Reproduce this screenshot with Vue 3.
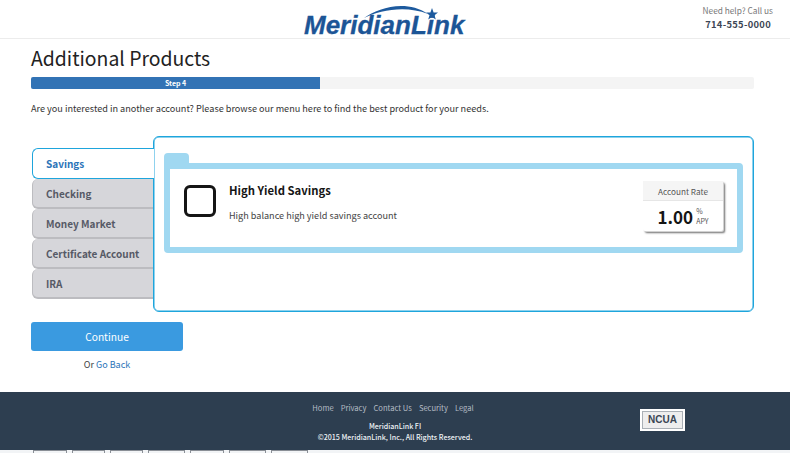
<template>
  <div class="page">
    <header class="top">
      <div class="logo">
        <svg class="swoosh" width="84" height="24" viewBox="0 0 84 24">
          <path d="M4 16 C18 6 46 -3 68 12 C46 3 20 8 4 16 Z" fill="#1d5a9e" />
          <polygon points="72,6 73.6,10.4 78,10.4 74.5,13.2 75.8,17.6 72,15 68.2,17.6 69.5,13.2 66,10.4 70.4,10.4" fill="#1d5a9e" />
        </svg>
        <span>MeridianLink</span>
      </div>
      <div class="help">
        <div class="help-text">Need help? Call us</div>
        <div class="phone">714-555-0000</div>
      </div>
    </header>

    <main class="content">
      <h1>Additional Products</h1>
      <div class="progress">
        <div class="progress-fill" :style="{ width: progress + '%' }">Step 4</div>
      </div>
      <p class="intro">Are you interested in another account? Please browse our menu here to find the best product for your needs.</p>

      <div class="picker">
        <ul class="tabs">
          <li v-for="(tab, i) in tabs" :key="tab" class="tab" :class="{ active: i === 0 }">{{ tab }}</li>
        </ul>
        <div class="panel">
          <div class="folder">
            <div class="folder-tab"></div>
            <div class="product">
              <div class="check"></div>
              <div class="info">
                <div class="name">High Yield Savings</div>
                <div class="desc">High balance high yield savings account</div>
              </div>
              <div class="rate">
                <div class="rate-head">Account Rate</div>
                <div class="rate-body">
                  <span class="rate-num">1.00</span>
                  <span class="rate-unit"><span>%</span><span>APY</span></span>
                </div>
              </div>
            </div>
          </div>
        </div>
      </div>

      <div class="actions">
        <button class="continue">Continue</button>
        <div class="back">Or <a href="#">Go Back</a></div>
      </div>
    </main>

    <footer class="foot">
      <div class="foot-main">
        <nav class="links">
          <a v-for="link in links" :key="link" href="#">{{ link }}</a>
        </nav>
        <div class="fi">MeridianLink FI</div>
        <div class="copy">©2015 MeridianLink, Inc., All Rights Reserved.</div>
      </div>
      <div class="ncua">NCUA</div>
    </footer>

    <!-- tops of the boxes cut off under the footer -->
    <div class="strip">
      <span v-for="(w, i) in stripBoxes" :key="i" class="strip-box" :style="{ width: w + 'px' }"></span>
    </div>
  </div>
</template>

<script setup>
const progress = 40
const tabs = ['Savings', 'Checking', 'Money Market', 'Certificate Account', 'IRA']
const links = ['Home', 'Privacy', 'Contact Us', 'Security', 'Legal']
const stripBoxes = [34, 33, 33, 37, 34, 37, 37]
</script>

<style>
html,
body {
  margin: 0;
  background: #fff;
}
</style>

<style scoped>
.page {
  width: 790px;
  height: 453px;
  overflow: hidden;
  font-family: "Noto Sans CJK SC", "Noto Sans", sans-serif;
  color: #333;
}

.top {
  height: 38px;
  border-bottom: 1px solid #ececec;
  position: relative;
  display: flex;
  justify-content: flex-end;
}

.logo {
  position: absolute;
  left: 304px;
  top: 12px;
  font-family: "Liberation Sans", sans-serif;
  font-weight: bold;
  font-style: italic;
  font-size: 26px;
  line-height: 27px;
  color: #1c5596;
  white-space: nowrap;
  -webkit-text-stroke: 0.3px #1c5596;
}

.swoosh {
  position: absolute;
  left: 56px;
  top: -10px;
}

.help {
  width: 87px;
  padding-top: 3px;
  padding-right: 17px;
  text-align: right;
}

.help-text {
  font-size: 8.3px;
  line-height: 14px;
  color: #777;
}

.phone {
  font-size: 9.4px;
  line-height: 14px;
  padding-right: 2px;
  font-weight: 700;
  color: #3c4654;
  letter-spacing: 0.3px;
}

.content {
  padding: 0 36px 0 31px;
  height: 353px;
}

h1 {
  margin: 0;
  padding-top: 3px;
  font-size: 19.4px;
  line-height: 32px;
  font-weight: 400;
  color: #222;
}

.progress {
  height: 12px;
  margin-top: 3px;
  background: #f4f4f4;
  border-radius: 2px;
  overflow: hidden;
}

.progress-fill {
  height: 12px;
  background: #3273b5;
  color: #fff;
  font-size: 7px;
  font-weight: 700;
  line-height: 12px;
  text-align: center;
}

.intro {
  margin: 12px 0 0;
  font-size: 9.13px;
  line-height: 15px;
  color: #333;
}

.picker {
  display: flex;
  margin-top: 20px;
  align-items: flex-start;
}

.tabs {
  list-style: none;
  margin: 12px -1px 0 1px;
  padding: 0;
  width: 122px;
  position: relative;
  z-index: 1;
}

.tab {
  box-sizing: border-box;
  height: 30px;
  margin-right: 1px;
  padding-left: 13px;
  background: #d6d6da;
  border: 1px solid #bcbcc0;
  border-width: 0 0 2px 1px;
  border-radius: 6px 0 0 6px;
  font-size: 10px;
  line-height: 29px;
  font-weight: 700;
  color: #565a66;
  white-space: nowrap;
}

.tab.active {
  height: 31px;
  margin-right: 0;
  background: #fff;
  border: 1px solid #1ea5dc;
  border-right: 0;
  color: #2b74b8;
  line-height: 29px;
}

.panel {
  box-sizing: border-box;
  flex: 1;
  height: 176px;
  border: 1px solid #1ea5dc;
  box-shadow: inset 0 0 0 0.5px #1ea5dc;
  border-radius: 6px;
  padding: 16px 10px 0;
  background: #fff;
}

.folder-tab {
  width: 25px;
  height: 10px;
  background: #a0d8f1;
  border-radius: 4px 4px 0 0;
}

.product {
  box-sizing: border-box;
  height: 90px;
  display: flex;
  border: 6px solid #a0d8f1;
  border-radius: 0 4px 4px 4px;
  padding: 16px 14px 0 14px;
  background: #fff;
}

.check {
  box-sizing: border-box;
  width: 32px;
  height: 32px;
  border: 3px solid #151515;
  border-radius: 6px;
}

.info {
  flex: 1;
  margin-left: 13px;
}

.name {
  font-size: 11.3px;
  font-weight: 700;
  line-height: 16px;
  color: #151515;
  margin-top: -3px;
}

.desc {
  font-size: 9.1px;
  line-height: 15px;
  margin-top: 10px;
  color: #444;
}

.rate {
  box-sizing: border-box;
  width: 80px;
  height: 50px;
  margin-top: -4px;
  background: #fff;
  border-radius: 2px;
  box-shadow: 1px 1px 1px #ddd, 2px 2px 2px #666;
}

.rate-head {
  height: 19px;
  background: #f5f5f5;
  border-bottom: 1px solid #e6e6e6;
  font-size: 8.2px;
  line-height: 20px;
  text-align: center;
  color: #555;
}

.rate-body {
  display: flex;
  justify-content: center;
  align-items: center;
  height: 30px;
  gap: 3px;
}

.rate-num {
  font-size: 17px;
  font-weight: 700;
  line-height: 29px;
  color: #151515;
}

.rate-unit {
  display: flex;
  flex-direction: column;
  font-size: 7px;
  line-height: 10px;
  color: #555;
}

.actions {
  width: 152px;
  margin-top: 10px;
  text-align: center;
}

.continue {
  display: block;
  width: 152px;
  height: 29px;
  border: 0;
  border-radius: 3px;
  background: #3a9ae0;
  color: #fff;
  font-family: inherit;
  font-size: 10.2px;
}

.back {
  margin-top: 6px;
  font-size: 9px;
  line-height: 16px;
  color: #444;
}

.back a {
  color: #2b74b8;
  text-decoration: none;
}

.foot {
  height: 58px;
  background: #2d3e50;
  position: relative;
  display: flex;
  justify-content: center;
}

.foot-main {
  width: 160px;
  text-align: center;
  padding-top: 9px;
}

.links {
  display: flex;
  justify-content: center;
  gap: 7px;
  padding-right: 4px;
  font-size: 7.6px;
  line-height: 14px;
}

.links a {
  color: #b4bcc4;
  text-decoration: none;
  white-space: nowrap;
}

.fi,
.copy {
  font-size: 7.1px;
  line-height: 11px;
  color: #eef2f5;
  white-space: nowrap;
  font-weight: 500;
}

.fi {
  margin-top: 6px;
}

.ncua {
  position: absolute;
  left: 640px;
  top: 17px;
  box-sizing: border-box;
  width: 45px;
  height: 22px;
  border: 2px solid #fff;
  box-shadow: inset 0 0 0 1px #aab0b6;
  background: #eee;
  font-family: "Liberation Sans", sans-serif;
  font-size: 10px;
  font-weight: 700;
  line-height: 18px;
  text-align: center;
  color: #3a4654;
}

.strip {
  height: 3px;
  display: flex;
  gap: 5px;
  padding-left: 33px;
  background: #f2f4f6;
}

.strip-box {
  box-sizing: border-box;
  height: 3px;
  border: 1px solid #8a8f96;
  border-bottom: 0;
}
</style>
